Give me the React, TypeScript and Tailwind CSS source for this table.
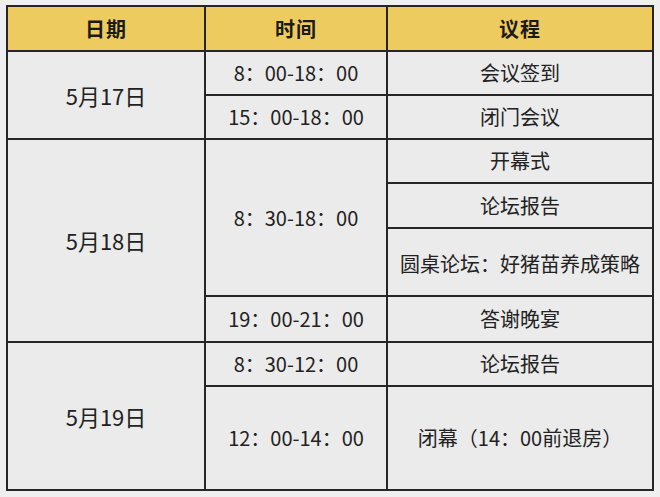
import React from "react";

const cell = "flex items-center justify-center bg-[#ebebeb] text-[20px] text-[#222]";
const head = "flex items-center justify-center bg-[#eecb5e] text-[20px] font-bold tracking-[1px] text-[#1a1a1a]";

export default function App() {
  return (
    <div
      className="min-h-screen w-full bg-[#efefef] pt-[5px] pl-[6px]"
      style={{ fontFamily: '"Noto Sans CJK SC", "Noto Sans", sans-serif' }}
    >
      <div className="grid w-[648px] grid-cols-[196px_180px_264px] grid-rows-[43px_42px_42px_42px_43px_66px_44px_42px_102px] gap-[2px] bg-[#262626] p-[2px]">
        {/* header */}
        <div className={head}>日期</div>
        <div className={head}>时间</div>
        <div className={head}>议程</div>

        {/* 5/17 */}
        <div className={`${cell} row-span-2 text-[22px]`}>5月17日</div>
        <div className={cell}>8：00-18：00</div>
        <div className={cell}>会议签到</div>
        <div className={cell}>15：00-18：00</div>
        <div className={cell}>闭门会议</div>

        {/* 5/18 */}
        <div className={`${cell} row-span-4 text-[22px]`}>5月18日</div>
        <div className={`${cell} row-span-3`}>8：30-18：00</div>
        <div className={cell}>开幕式</div>
        <div className={cell}>论坛报告</div>
        <div className={`${cell} pt-[4px]`}>圆桌论坛：好猪苗养成策略</div>
        <div className={cell}>19：00-21：00</div>
        <div className={cell}>答谢晚宴</div>

        {/* 5/19 */}
        <div className={`${cell} row-span-2 text-[22px]`}>5月19日</div>
        <div className={cell}>8：30-12：00</div>
        <div className={cell}>论坛报告</div>
        <div className={cell}>12：00-14：00</div>
        <div className={cell}>闭幕（14：00前退房）</div>
      </div>
    </div>
  );
}
